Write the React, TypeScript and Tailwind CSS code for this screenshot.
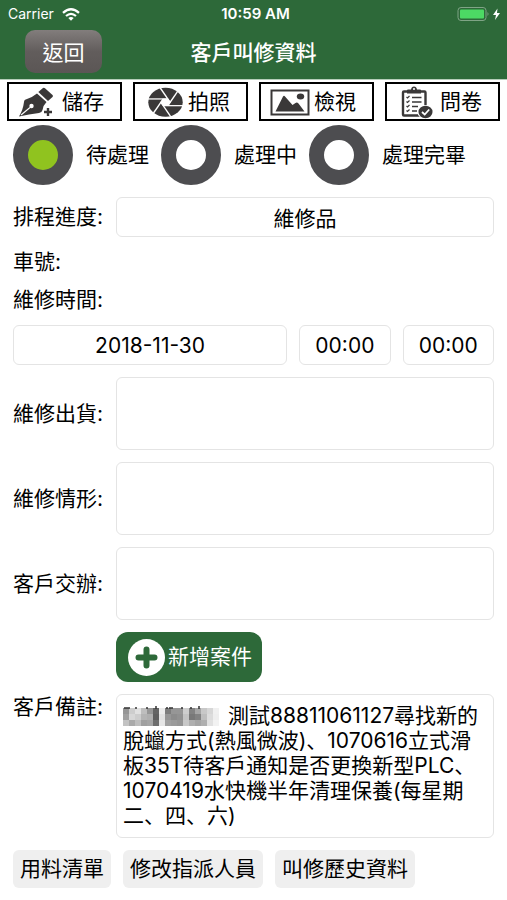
import React from 'react';

const fieldClass =
  'block w-full min-w-0 h-10 rounded-md border border-[#e4e4e4] bg-white text-center text-[21px] outline-none';

const PenIcon = () => (
  <svg viewBox="0 0 40 34" className="w-10 h-[34px] shrink-0" aria-hidden="true">
    <path d="M1 31.500 Q5 25 6 17 Q6 14.500 9 14 Q14 12.500 19 8.500 L28.500 17 Q25 20.500 24.500 25 Q24 27.500 21 28 Q11 29 1 31.500 Z" fill="#3a3838" />
    <path d="M3 30 L12 22.500" stroke="#fff" strokeWidth="1.100" />
    <circle cx="13.500" cy="21" r="2.200" fill="#fff" />
    <path d="M20.300 7 L25 3 Q26 2.400 27 3.200 L34.500 10 Q35.500 11 34.500 12 L30 16 Z" fill="#3a3838" />
    <path d="M30 23 V31 M26 27 H34" stroke="#3a3838" strokeWidth="2.400" />
  </svg>
);

const ApertureIcon = () => (
  <svg viewBox="0 0 40 34" className="w-10 h-[34px] shrink-0" aria-hidden="true">
    <g transform="translate(21.500 17.300) scale(1 0.840)">
      <circle r="17.200" fill="#3a3838" />
      <polygon points="-2.600,-4.500 2.600,-4.500 5.200,0 2.600,4.500 -2.600,4.500 -5.200,0" fill="#fff" />
      {[0, 60, 120, 180, 240, 300].map((deg) => (
        <path key={deg} d="M-17.500 -4 H2.300" transform={`rotate(${deg})`} stroke="#fff" strokeWidth="1.500" />
      ))}
    </g>
  </svg>
);

const PictureIcon = () => (
  <svg viewBox="0 0 40 34" className="w-10 h-[34px] shrink-0" aria-hidden="true">
    <rect x="1.500" y="5.500" width="37" height="24" fill="none" stroke="#3a3838" strokeWidth="2" />
    <path d="M5.500 26.500 L13 11.500 Q14 10 15 11.500 L22.500 20 L25.500 18 Q27 17 28.500 18.500 L34.500 26.500 Z" fill="#3a3838" />
    <ellipse cx="30.500" cy="11.500" rx="3.700" ry="3" fill="#3a3838" />
  </svg>
);

const ClipboardIcon = () => (
  <svg viewBox="0 0 40 34" className="w-10 h-[34px] shrink-0" aria-hidden="true">
    <rect x="7" y="6.500" width="22.500" height="24" rx="1" fill="#fff" stroke="#3a3838" strokeWidth="2.400" />
    <path d="M11 8.500 V5.500 Q11 4.500 12 4.500 H15 Q15.500 1.500 18 1.500 Q20.500 1.500 21 4.500 H24 Q25 4.500 25 5.500 V8.500 Z" fill="#3a3838" />
    <circle cx="18" cy="4" r="1" fill="#fff" />
    <path
      d="M10.500 12 L11.500 13 L13.500 11 M10.500 16.500 L11.500 17.500 L13.500 15.500 M10.500 21 L11.500 22 L13.500 20 M10.500 25.500 L11.500 26.500 L13.500 24.500"
      fill="none"
      stroke="#3a3838"
      strokeWidth="1.200"
    />
    <path d="M16 12.500 H25.500 M16 17 H25.500 M16 21.500 H22 M16 26 H21" stroke="#3a3838" strokeWidth="1.300" />
    <ellipse cx="29.500" cy="27" rx="8" ry="7" fill="#fff" />
    <ellipse cx="29.500" cy="27" rx="7" ry="6.200" fill="#3a3838" />
    <path d="M26 27 L28.700 29.500 L33.200 24.500" fill="none" stroke="#fff" strokeWidth="1.800" />
  </svg>
);

const toolbar = [
  { label: '儲存', Icon: PenIcon },
  { label: '拍照', Icon: ApertureIcon },
  { label: '檢視', Icon: PictureIcon },
  { label: '問卷', Icon: ClipboardIcon },
];

const statuses = ['待處理', '處理中', '處理完畢'];

const noteFields = [
  { id: 'shipment', label: '維修出貨:' },
  { id: 'condition', label: '維修情形:' },
  { id: 'request', label: '客戶交辦:' },
];

const links = ['用料清單', '修改指派人員', '叫修歷史資料'];

// Grey levels of the masked customer name, one row per line of blocks
const maskRows = [
  [150, 205, 225, 190, 150, 100, 235, 125, 150, 150, 205, 130, 165, 200, 215, 240],
  [160, 215, 205, 180, 175, 95, 225, 150, 140, 145, 195, 120, 130, 190, 220, 238],
  [195, 170, 190, 160, 165, 110, 230, 160, 155, 150, 200, 175, 165, 175, 225, 242],
];

const MaskedName = () => (
  <svg viewBox="0 0 96 21" className="absolute left-[7px] top-3 w-24 h-[21px]" aria-hidden="true">
    {maskRows.map((row, y) =>
      row.map((v, x) => (
        <rect key={`${x}-${y}`} x={x * 6} y={y * 6 + 2} width="6" height="6" fill={`rgb(${v},${v},${v})`} />
      ))
    )}
    <path d="M1 2 H7 M13 1 V3 M24 1 V3 M33 0 V3 M44 1 V3 M46 2 H50 M59 1 V3 M68 1 V3 M76 0 V3" stroke="#333" strokeWidth="1.500" />
  </svg>
);

const StatusBar = () => (
  <div className="grid grid-cols-[1fr_auto_1fr] items-center h-7 pl-2 pr-1 text-[14px] leading-5">
    <div className="flex items-center gap-2">
      <span>Carrier</span>
      <svg viewBox="0 0 18 13" className="w-[18px] h-[13px]" aria-hidden="true">
        <path d="M1 4.800 Q9 -2.200 17 4.800" fill="none" stroke="#fff" strokeWidth="2.300" />
        <path d="M4 8 Q9 3.600 14 8" fill="none" stroke="#fff" strokeWidth="2.200" />
        <path d="M6.300 10 Q9 7.800 11.700 10 L9 12.700 Z" fill="#fff" />
      </svg>
    </div>
    <span className="text-[15px] font-semibold">10:59 AM</span>
    <div className="flex justify-end">
      <svg viewBox="0 0 46 16" className="w-[46px] h-4" aria-hidden="true">
        <rect x="1" y="1.500" width="28" height="13" rx="3" fill="none" stroke="#7fa486" />
        <rect x="3" y="3.500" width="24" height="9" rx="1" fill="#4cd964" />
        <path d="M30.500 6 Q32.500 8 30.500 10 Z" fill="#7fa486" />
        <path d="M40.500 2.500 L36 9 H39 L38 14 L43 7 H40 Z" fill="#fff" />
      </svg>
    </div>
  </div>
);

const App: React.FC = () => {
  return (
    <div className="min-h-screen bg-white text-black text-[21px] leading-[26px] font-[Inter,'Noto_Sans_CJK_TC',sans-serif]">
      {/* Header */}
      <header className="h-20 bg-[#2d6939] text-white border-b border-[#b5cdb9]">
        <StatusBar />
        <div className="grid grid-cols-[1fr_auto_1fr] items-center pt-[2px]">
          <div className="pl-[25px]">
            <button className="w-[77px] h-[43px] pt-[2px] rounded-[10px] bg-linear-to-b from-[#827d7c] via-[#625d5c] via-50% to-[#5b5655]">
              返回
            </button>
          </div>
          <h1 className="pt-[2px] font-medium">客戶叫修資料</h1>
        </div>
      </header>

      {/* Toolbar */}
      <div className="grid grid-cols-4 gap-[11px] px-[7px] pt-[2px]">
        {toolbar.map(({ label, Icon }) => (
          <button key={label} className="h-[39px] border-[2px] border-black flex items-center pl-[9px] gap-1 whitespace-nowrap">
            <Icon />
            <span>{label}</span>
          </button>
        ))}
      </div>

      <main className="flex flex-col gap-3 px-[13px] pt-1 pb-3">
        <div className="flex items-center gap-3">
          {statuses.map((status, i) => (
            <label key={status} className="flex items-center gap-[13px] whitespace-nowrap">
              <input
                type="radio"
                name="status"
                defaultChecked={i === 0}
                className="appearance-none w-[60px] h-[60px] shrink-0 rounded-full border-[15px] border-[#4d4d50] bg-white checked:bg-[#90c31f]"
              />
              {status}
            </label>
          ))}
        </div>

        <div className="flex items-center">
          <label htmlFor="progress" className="w-[103px] shrink-0">排程進度:</label>
          <input id="progress" type="text" defaultValue="維修品" className={fieldClass} />
        </div>

        <p>車號:</p>
        <p id="repair-time">維修時間:</p>

        <div role="group" aria-labelledby="repair-time" className="grid grid-cols-[3fr_1fr_1fr] gap-3">
          <input type="text" aria-label="日期" defaultValue="2018-11-30" className={fieldClass} />
          <input type="text" aria-label="開始時間" defaultValue="00:00" className={fieldClass} />
          <input type="text" aria-label="結束時間" defaultValue="00:00" className={fieldClass} />
        </div>

        {noteFields.map((field) => (
          <div key={field.id} className="flex items-center">
            <label htmlFor={field.id} className="w-[103px] shrink-0">{field.label}</label>
            <textarea
              id={field.id}
              className="block flex-1 min-w-0 h-[73px] px-[6px] py-2 rounded-md border border-[#e4e4e4] resize-none outline-none"
            />
          </div>
        ))}

        <button className="self-start ml-[103px] h-[50px] pl-3 pr-[10px] flex items-center gap-[3px] rounded-xl bg-[#2d6939] text-white">
          <svg viewBox="0 0 37 37" className="w-[37px] h-[37px]" aria-hidden="true">
            <circle cx="18.500" cy="18.500" r="18.500" fill="#fff" />
            <path d="M18.500 10.500 V26.500 M10.500 18.500 H26.500" stroke="#2d6939" strokeWidth="6" strokeLinecap="round" />
          </svg>
          新增案件
        </button>

        <div className="flex items-start">
          <label htmlFor="remark" className="w-[103px] shrink-0">客戶備註:</label>
          <div className="relative flex-1 min-w-0">
            <textarea
              id="remark"
              className="block w-full h-36 px-[6px] py-2 indent-[105px] leading-[25px] font-[Inter,'Noto_Sans_CJK_JP',sans-serif] rounded-md border border-[#e4e4e4] resize-none outline-none"
              defaultValue="測試88811061127尋找新的脫蠟方式(熱風微波)、1070616立式滑板35T待客戶通知是否更換新型PLC、1070419水快機半年清理保養(每星期二、四、六)"
            />
            <MaskedName />
          </div>
        </div>

        <div className="flex gap-3">
          {links.map((link) => (
            <button key={link} className="h-[38px] px-[7px] rounded-md bg-[#efefef] whitespace-nowrap">
              {link}
            </button>
          ))}
        </div>
      </main>
    </div>
  );
};

export default App;
